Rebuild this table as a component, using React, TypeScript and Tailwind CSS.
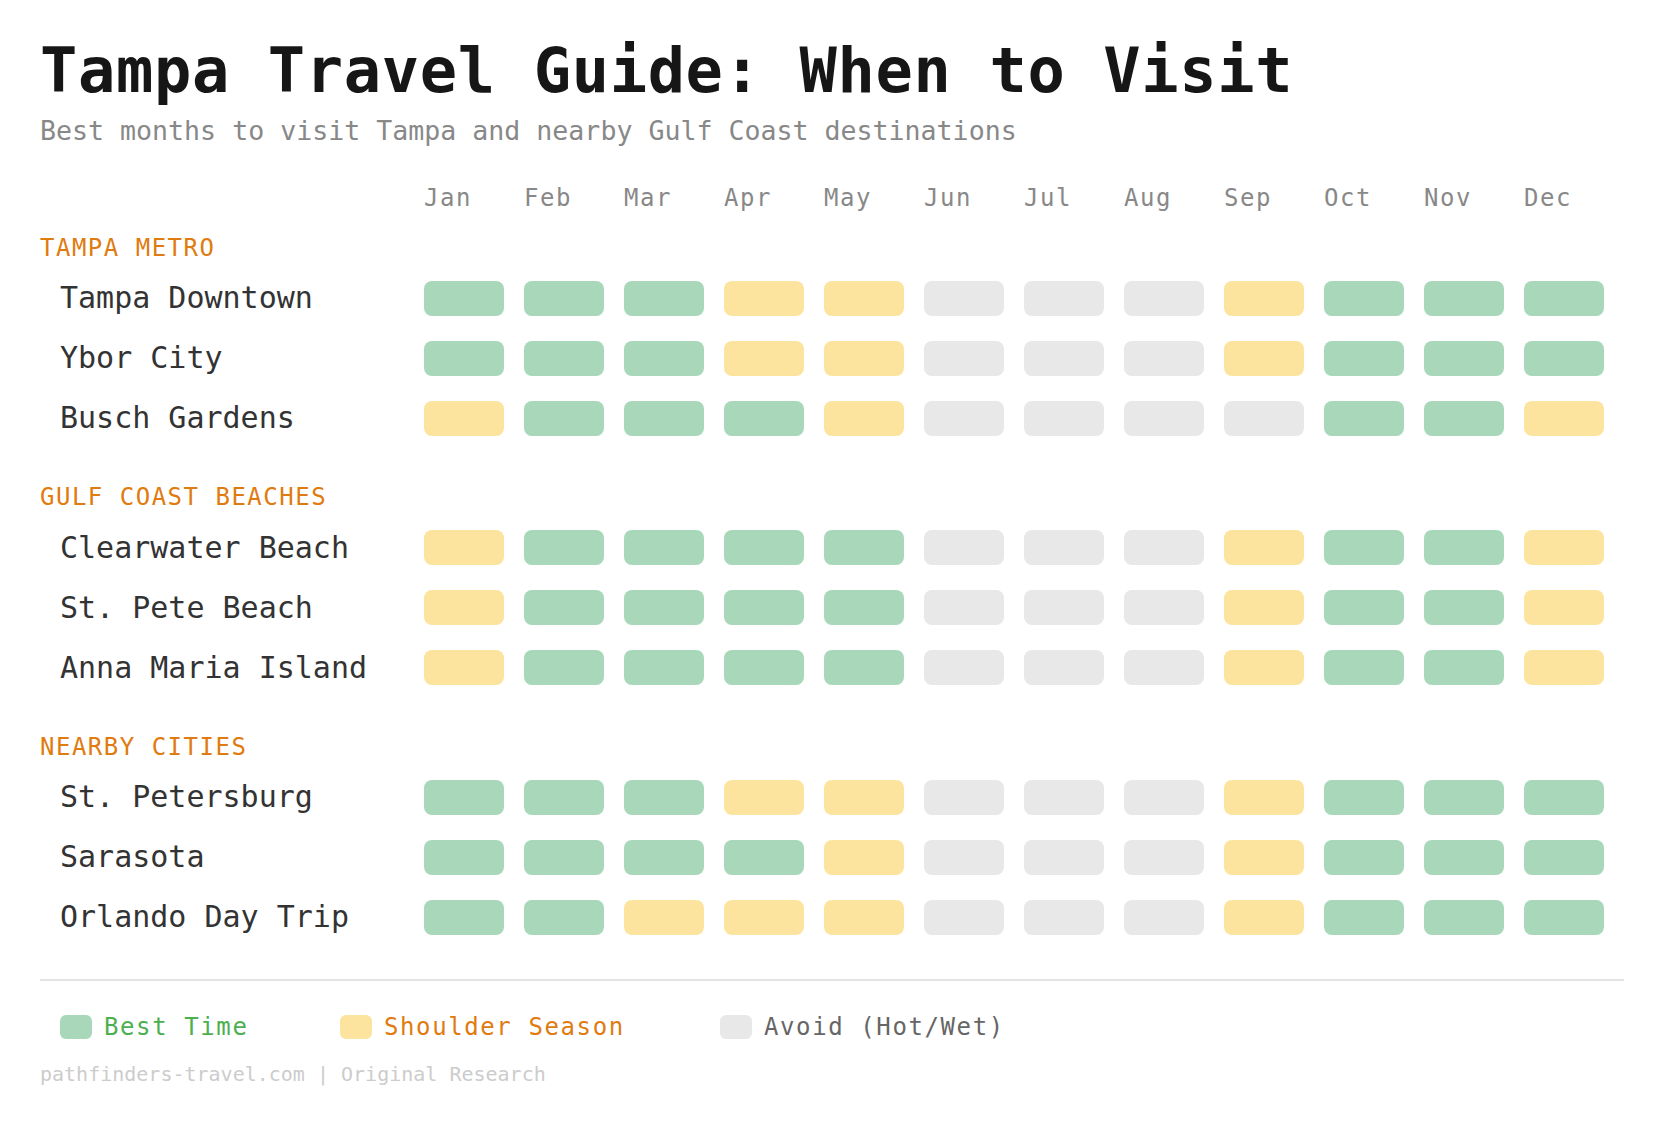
import React from "react";

type Level = "G" | "S" | "A";

const months = ["Jan", "Feb", "Mar", "Apr", "May", "Jun", "Jul", "Aug", "Sep", "Oct", "Nov", "Dec"];

const sections: { title: string; rows: { name: string; data: string }[] }[] = [
  {
    title: "TAMPA METRO",
    rows: [
      { name: "Tampa Downtown", data: "GGGSSAAASGGG" },
      { name: "Ybor City", data: "GGGSSAAASGGG" },
      { name: "Busch Gardens", data: "SGGGSAAAAGGS" },
    ],
  },
  {
    title: "GULF COAST BEACHES",
    rows: [
      { name: "Clearwater Beach", data: "SGGGGAAASGGS" },
      { name: "St. Pete Beach", data: "SGGGGAAASGGS" },
      { name: "Anna Maria Island", data: "SGGGGAAASGGS" },
    ],
  },
  {
    title: "NEARBY CITIES",
    rows: [
      { name: "St. Petersburg", data: "GGGSSAAASGGG" },
      { name: "Sarasota", data: "GGGGSAAASGGG" },
      { name: "Orlando Day Trip", data: "GGSSSAAASGGG" },
    ],
  },
];

const cellClass: Record<Level, string> = {
  G: "bg-[#a8d8b9]",
  S: "bg-[#fce49e]",
  A: "bg-[#e8e8e8]",
};

export default function App() {
  return (
    <div className="min-h-screen w-full bg-white font-['DejaVu_Sans_Mono',monospace]">
      <div className="px-10 pt-10 pb-10">
        <h1 className="text-[62px] leading-none font-bold tracking-[0.65px] text-[#161616]">
          Tampa Travel Guide: When to Visit
        </h1>
        <p className="mt-[16px] text-[26.6px] leading-none text-[#888888]">
          Best months to visit Tampa and nearby Gulf Coast destinations
        </p>

        <div className="mt-[41px] flex">
          <div className="w-[384px] shrink-0" />
          {months.map((m) => (
            <div key={m} className="w-[100px] shrink-0 text-[24px] leading-none tracking-[1.5px] text-[#888888]">
              {m}
            </div>
          ))}
        </div>

        {sections.map((s, si) => (
          <div key={s.title} className={si === 0 ? "mt-[26px]" : "mt-[37px]"}>
            <div className="text-[24px] leading-none tracking-[1.5px] text-[#df7b0f]">{s.title}</div>
            <div className="mt-[8.5px] flex flex-col">
              {s.rows.map((r) => (
                <div key={r.name} className="flex h-[60px] items-center">
                  <div className="w-[384px] shrink-0 pl-5 text-[30px] leading-none text-[#333333]">{r.name}</div>
                  {r.data.split("").map((c, i) => (
                    <div key={i} className="w-[100px] shrink-0">
                      <div className={`h-[35px] w-20 rounded-lg ${cellClass[c as Level]}`} />
                    </div>
                  ))}
                </div>
              ))}
            </div>
          </div>
        ))}

        <div className="mt-[32px] h-[2px] w-full bg-[#e4e4e4]" />

        <div className="mt-[34px] flex items-center pl-5">
          <div className="flex w-[280px] items-center gap-3">
            <div className="h-6 w-8 rounded-md bg-[#a8d8b9]" />
            <span className="text-[24px] leading-none tracking-[1.6px] text-[#4caf50]">Best Time</span>
          </div>
          <div className="flex w-[380px] items-center gap-3">
            <div className="h-6 w-8 rounded-md bg-[#fce49e]" />
            <span className="text-[24px] leading-none tracking-[1.6px] text-[#e07b10]">Shoulder Season</span>
          </div>
          <div className="flex items-center gap-3">
            <div className="h-6 w-8 rounded-md bg-[#e8e8e8]" />
            <span className="text-[24px] leading-none tracking-[1.6px] text-[#666666]">Avoid (Hot/Wet)</span>
          </div>
        </div>

        <div className="mt-[25px] text-[20px] leading-none text-[#cccccc]">
          pathfinders-travel.com | Original Research
        </div>
      </div>
    </div>
  );
}
